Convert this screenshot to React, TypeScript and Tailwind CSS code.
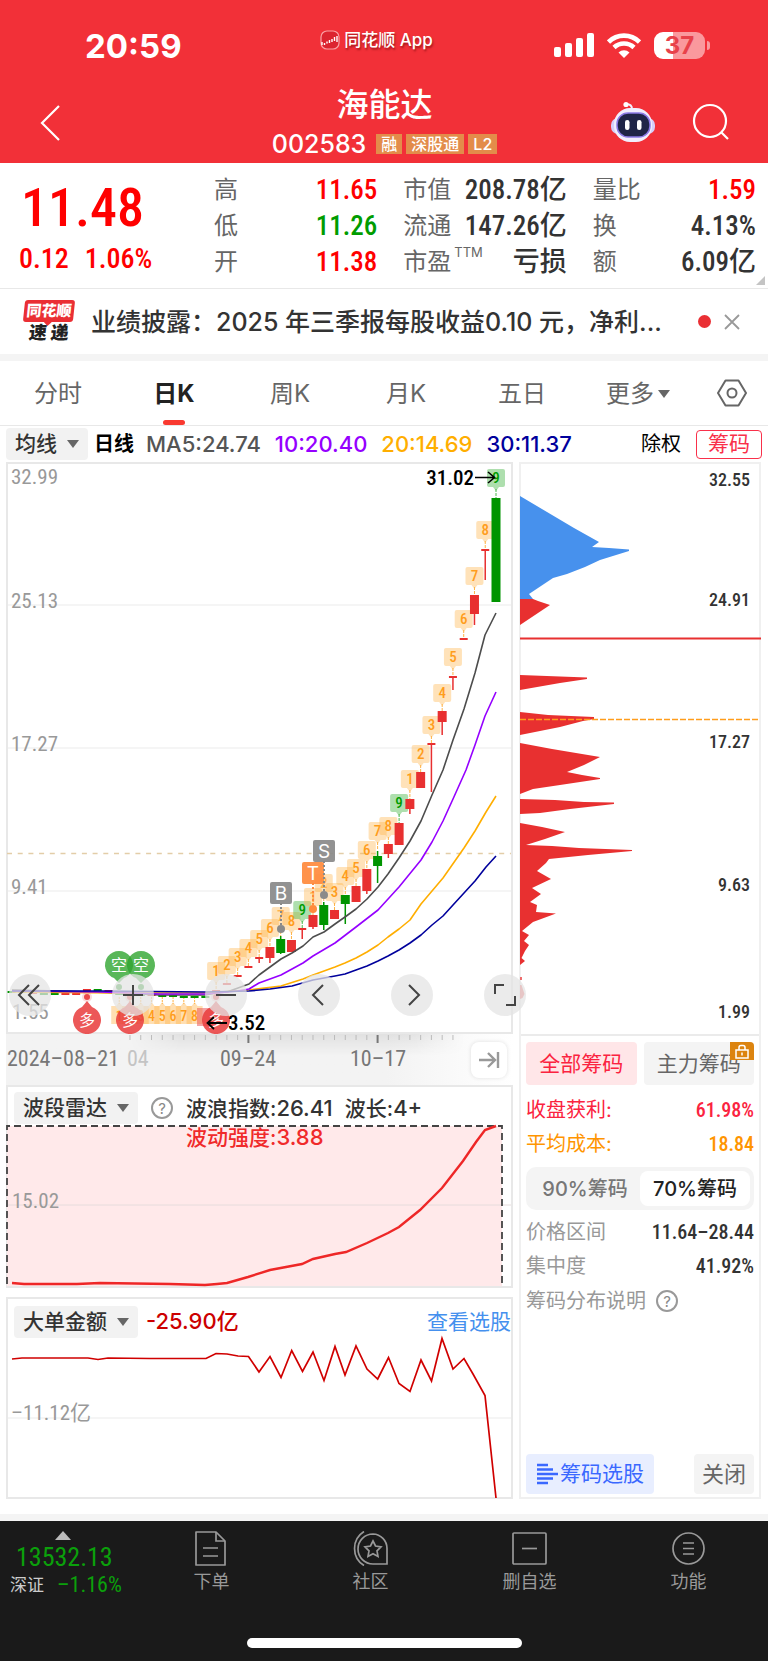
import React from 'react';

const DIN = "[font-family:'Roboto_Condensed','Roboto','Noto_Sans_CJK_SC',sans-serif]";
const UI = "[font-family:'Inter','Noto_Sans_CJK_SC',sans-serif]";

const STEP = 10.765;
const cx = (i: number) => 496 - STEP * i;

const RED = '#e83030';
const GREEN = '#009400';

type Candle = { i: number; c: 'r' | 'g'; top: number; bottom: number; hi?: number; lo?: number };

const candles: Candle[] = [
  { i: 0, c: 'g', top: 498, bottom: 602 },
  { i: 1, c: 'r', top: 549, bottom: 551, lo: 580 },
  { i: 2, c: 'r', top: 595, bottom: 614, lo: 625 },
  { i: 3, c: 'r', top: 638, bottom: 640 },
  { i: 4, c: 'r', top: 676, bottom: 678, lo: 690 },
  { i: 5, c: 'r', top: 711, bottom: 722, lo: 735 },
  { i: 6, c: 'r', top: 743, bottom: 745, lo: 792 },
  { i: 7, c: 'r', top: 772, bottom: 788 },
  { i: 8, c: 'r', top: 799, bottom: 809, lo: 814 },
  { i: 9, c: 'r', top: 823, bottom: 845 },
  { i: 10, c: 'r', top: 844, bottom: 854, lo: 858 },
  { i: 11, c: 'g', top: 856, bottom: 866, hi: 851, lo: 883 },
  { i: 12, c: 'r', top: 869, bottom: 891, lo: 894 },
  { i: 13, c: 'r', top: 886, bottom: 902 },
  { i: 14, c: 'g', top: 895, bottom: 904, lo: 924 },
  { i: 15, c: 'r', top: 910, bottom: 919 },
  { i: 16, c: 'g', top: 905, bottom: 925, hi: 902, lo: 930 },
  { i: 17, c: 'r', top: 915, bottom: 927, lo: 929 },
  { i: 18, c: 'r', top: 928, bottom: 930, lo: 939 },
  { i: 19, c: 'r', top: 940, bottom: 952 },
  { i: 20, c: 'g', top: 939, bottom: 953, hi: 936, lo: 954 },
  { i: 21, c: 'r', top: 947, bottom: 958, lo: 963 },
  { i: 22, c: 'r', top: 957, bottom: 959, lo: 963 },
  { i: 23, c: 'r', top: 966, bottom: 968 },
  { i: 24, c: 'r', top: 975, bottom: 977 },
  { i: 25, c: 'r', top: 983, bottom: 985 },
  { i: 26, c: 'r', top: 990, bottom: 992 },
  { i: 27, c: 'g', top: 996, bottom: 998 },
  { i: 28, c: 'g', top: 996, bottom: 998 },
  { i: 29, c: 'g', top: 996, bottom: 998 },
  { i: 30, c: 'g', top: 995, bottom: 997 },
  { i: 31, c: 'g', top: 995, bottom: 997 },
  { i: 32, c: 'r', top: 994, bottom: 996 },
  { i: 33, c: 'g', top: 994, bottom: 996 },
  { i: 34, c: 'g', top: 993, bottom: 995 },
  { i: 35, c: 'g', top: 993, bottom: 995 },
  { i: 36, c: 'r', top: 990, bottom: 992 },
  { i: 37, c: 'g', top: 989, bottom: 991 },
  { i: 38, c: 'r', top: 989, bottom: 991 },
  { i: 39, c: 'r', top: 993, bottom: 995 },
  { i: 40, c: 'r', top: 993, bottom: 995 },
  { i: 41, c: 'g', top: 993, bottom: 995 },
  { i: 42, c: 'g', top: 993, bottom: 995 },
  { i: 43, c: 'r', top: 992, bottom: 994 },
  { i: 44, c: 'g', top: 991, bottom: 993 },
  { i: 45, c: 'g', top: 991, bottom: 993 },
];

type Mark = [number, string, number, number];
const marks: Mark[] = [
  [26, '1', 971, 990], [25, '2', 965, 983], [24, '3', 957, 975], [23, '4', 948, 966],
  [22, '5', 939, 957], [21, '6', 928, 947], [20, '7', 916, 936], [19, '8', 921, 940],
  [18, '9', 910, 928], [17, '1', 897, 915], [16, '2', 883, 902], [15, '3', 892, 910],
  [14, '4', 876, 895], [13, '5', 868, 886], [12, '6', 850, 869], [11, '7', 831, 850],
  [10, '8', 826, 844], [9, '9', 803, 823], [8, '1', 779, 799], [7, '2', 754, 772],
  [6, '3', 725, 743], [5, '4', 693, 711], [4, '5', 657, 676], [3, '6', 619, 638],
  [2, '7', 576, 595], [1, '8', 530, 549], [0, '9', 478, 498],
];

const lowMarks: [number, string][] = [
  [35, '1'], [34, '2'], [33, '3'], [32, '4'], [31, '5'], [30, '6'], [29, '7'], [28, '8'],
];

const ma5 = '12,990 60,991 120,993 160,995 205,995 216,993 227,992 238,988 249,984 259,975 270,967 281,959 292,953 303,946 313,937 324,932 335,924 345,917 356,909 367,899 378,887 388,874 399,858 410,841 421,821 432,795 443,770 453,740 464,709 475,673 485,635 496,613';
const ma10 = '12,991 100,992 160,994 205,994 238,991 249,989 259,983 281,975 292,969 303,963 313,956 335,943 356,927 378,910 399,887 421,860 432,842 443,821 453,799 466,770 475,745 485,716 496,692';
const ma20 = '12,992 120,993 205,993 249,990 281,986 303,979 313,975 335,967 345,963 356,958 367,952 378,945 388,937 399,929 410,920 421,904 443,878 464,848 475,831 486,812 496,796';
const ma30 = '12,991 100,991 205,992 249,991 270,989 292,986 313,980 335,976 345,974 356,970 367,966 378,961 388,956 399,950 410,943 421,935 432,925 443,916 453,905 464,893 475,881 486,867 496,856';

function Grid({ y, x2 = 511 }: { y: number; x2?: number }) {
  return <line x1="8" x2={x2} y1={y} y2={y} stroke="#ebebeb" strokeWidth="1" />;
}

function NumberMark({ i, n, y, tip }: { i: number; n: string; y: number; tip: number }) {
  const x = cx(i);
  const nine = n === '9';
  const fill = nine ? '#4cb84c' : '#ffb347';
  const ink = nine ? '#009c00' : '#ff9d1c';
  const hidden = i === 16 || i === 17 || i === 20;
  return (
    <g>
      <path d={`M${x - 7} ${y - 9}h14q2 0 2 2v14q0 2 -2 2h-4l-3 4l-3 -4h-4q-2 0 -2 -2v-14q0 -2 2 -2z`} fill={fill} fillOpacity={nine ? 0.45 : 0.38} />
      <line x1={x} x2={x} y1={y + 11} y2={tip} stroke={fill} strokeDasharray="3 1" />
      <text x={x} y={y + 5} textAnchor="middle" fontSize="15" fontWeight="500" fill={ink} fillOpacity={hidden ? 0.7 : 1} className={DIN}>{n}</text>
    </g>
  );
}

function TradeMark({ x, y, dot, label, color }: { x: number; y: number; dot: number; label: string; color: string }) {
  return (
    <g>
      <line x1={x} x2={x} y1={y + 10} y2={dot} stroke={color} strokeWidth="2" strokeDasharray="2 2" />
      <circle cx={x} cy={dot} r="4" fill={color} />
      <rect x={x - 11} y={y - 11} width="22" height="22" rx="2" fill={color} fillOpacity="0.93" />
      <text x={x} y={y + 7} textAnchor="middle" fontSize="19" fill="#fff" className={UI}>{label}</text>
    </g>
  );
}

function Pin({ x, up }: { x: number; up?: boolean }) {
  return up ? (
    <g>
      <circle cx={x} cy="997" r="3" fill="#ea4a4a" />
      <circle cx={x} cy="997" r="5" fill="#ea4a4a" fillOpacity="0.2" />
      <path d={`M${x} 1001l5 6a14 14 0 1 1 -10 0z`} fill="#e93c3c" fillOpacity="0.86" />
      <text x={x} y="1026" textAnchor="middle" fontSize="16" fill="#fff" className={UI}>多</text>
    </g>
  ) : (
    <g>
      <circle cx={x} cy="987" r="3" fill="#3ba53b" />
      <path d={`M${x} 983l5 -5a14 14 0 1 0 -10 0z`} fill="#2fa52f" fillOpacity="0.8" />
      <text x={x} y="971" textAnchor="middle" fontSize="16" fill="#fff" className={UI}>空</text>
    </g>
  );
}

function AxisText({ x, y, children, size = 21, fill = '#999', end }: { x: number; y: number; children: string; size?: number; fill?: string; end?: boolean }) {
  const dark = fill === '#000' || fill === '#333';
  return (
    <text x={x} y={y} fontSize={size} fill={fill} fontWeight={dark ? 500 : 400} textAnchor={end ? 'end' : 'start'} className={DIN}>{children}</text>
  );
}

function KChart() {
  return (
    <svg viewBox="6 462 507 572" className="block w-full" role="img" aria-label="日K">
      <rect x="7" y="463" width="505" height="570" fill="#fff" stroke="#e8e8e8" strokeWidth="2" />
      <Grid y={605} />
      <Grid y={748} />
      <Grid y={891} />
      <line x1="7" x2="511" y1="853.5" y2="853.5" stroke="#e3cda8" strokeWidth="1.5" strokeDasharray="5 5.7" />
      <AxisText x={11} y={484}>32.99</AxisText>
      <AxisText x={11} y={608}>25.13</AxisText>
      <AxisText x={11} y={751}>17.27</AxisText>
      <AxisText x={11} y={894}>9.41</AxisText>
      <AxisText x={12} y={1019}>1.55</AxisText>
      {marks.map(([i, n, y, tip]) => <NumberMark key={i} i={i} n={n} y={y} tip={tip} />)}
      {lowMarks.map(([i, n]) => (
        <g key={i}>
          <path d={`M${cx(i) - 8} 1006h5l3 -4l3 4h5v18h-16z`} fill="#ffb347" fillOpacity="0.42" />
          <line x1={cx(i)} x2={cx(i)} y1="997" y2="1004" stroke="#ffb347" strokeDasharray="2 1" />
          <text x={cx(i)} y="1021" textAnchor="middle" fontSize="14" fontWeight="500" fill="#ff9d1c" className={DIN}>{n}</text>
        </g>
      ))}
      <rect x="197" y="1008" width="16" height="18" fill="#ea4a4a" fillOpacity="0.5" />
      {candles.map(({ i, c, top, bottom, hi, lo }) => {
        const color = c === 'r' ? RED : GREEN;
        const thin = bottom - top < 3;
        const w = thin ? 8 : 9;
        return (
          <g key={i} fill={color}>
            <rect x={cx(i) - w / 2} y={top} width={w} height={bottom - top} />
            {(hi || lo) && <rect x={cx(i) - 0.75} y={hi ?? top} width="1.5" height={(lo ?? bottom) - (hi ?? top)} />}
          </g>
        );
      })}
      <g fill="none" strokeWidth="1.6" strokeLinejoin="round">
        <polyline points={ma5} stroke="#4d4d4d" />
        <polyline points={ma20} stroke="#ffae00" />
        <polyline points={ma10} stroke="#9500ff" />
        <polyline points={ma30} stroke="#00009c" />
      </g>
      <TradeMark x={281} y={893} dot={929} label="B" color="#8a8a8a" />
      <TradeMark x={313} y={873} dot={909} label="T" color="#ff8b3d" />
      <TradeMark x={324} y={851} dot={895} label="S" color="#8a8a8a" />
      <Pin x={119} />
      <Pin x={141} />
      <Pin x={87} up />
      <Pin x={130} up />
      <Pin x={216} up />
      <AxisText x={474} y={485} fill="#000" end>31.02</AxisText>
      <path d="M475 477.500h19M488 472l6.500 5.500l-6.500 5.500" fill="none" stroke="#000" strokeWidth="1.6" />
      <AxisText x={228} y={1030} fill="#000">3.52</AxisText>
      <path d="M227 1023h-19M214 1017l-6.500 6l6.500 6" fill="none" stroke="#000" strokeWidth="1.8" />
    </svg>
  );
}

const round = 'flex size-[42px] shrink-0 items-center justify-center rounded-full bg-[#e4e4e4]/75 text-[#444]';

function RoundButton({ label, d, className = '' }: { label: string; d: string; className?: string }) {
  return (
    <button type="button" aria-label={label} className={`${round} ${className}`}>
      <svg viewBox="0 0 42 42" className="size-[42px]" fill="none" stroke="currentColor" strokeWidth="2"><path d={d} /></svg>
    </button>
  );
}

function TimeAxis() {
  const ticks = Array.from({ length: 31 }, (_, k) => 34 - k);
  return (
    <div className="relative flex h-[51px] items-center bg-linear-to-r from-[#f3f3f3] from-75% to-white">
      <svg viewBox="6 1034 507 51" className="absolute inset-0 h-full w-full" aria-hidden="true">
        <defs>
          <linearGradient id="shade" x1="0" x2="0" y1="0" y2="1">
            <stop offset="0" stopColor="#000" stopOpacity="0.07" />
            <stop offset="1" stopColor="#000" stopOpacity="0" />
          </linearGradient>
          <linearGradient id="sides" x1="0" x2="1" y1="0" y2="0">
            <stop offset="0" stopColor="#fff" stopOpacity="0" />
            <stop offset="0.15" stopColor="#fff" />
            <stop offset="0.85" stopColor="#fff" />
            <stop offset="1" stopColor="#fff" stopOpacity="0" />
          </linearGradient>
          <mask id="fade"><rect x="130" y="1034" width="335" height="30" fill="url(#sides)" /></mask>
        </defs>
        <rect x="130" y="1034" width="335" height="22" fill="url(#shade)" mask="url(#fade)" />
        {ticks.map((i) => {
          const major = i === 23 || i === 11;
          return <line key={i} x1={cx(i)} x2={cx(i)} y1="1035" y2={major ? 1043 : 1040} stroke={major ? '#777' : '#bbb'} strokeWidth={major ? 2 : 1} />;
        })}
        <AxisText x={7} y={1066} size={22} fill="#777">2024–08–21</AxisText>
        <AxisText x={127} y={1066} size={22} fill="#c4c4c4">04</AxisText>
        <AxisText x={220} y={1066} size={22} fill="#777">09–24</AxisText>
        <AxisText x={350} y={1066} size={22} fill="#777">10–17</AxisText>
      </svg>
      <button type="button" aria-label="最新" className="relative mr-[6px] ml-auto flex size-[36px] items-center justify-center rounded-lg bg-white shadow-[0_0_4px_rgba(0,0,0,0.12)]">
        <svg viewBox="0 0 36 36" className="size-[36px]" fill="none" stroke="#999" strokeWidth="2.4"><path d="M8 18h15M17 11l7 7l-7 7M27 10v16" /></svg>
      </button>
    </div>
  );
}

function ChipChart() {
  return (
    <svg viewBox="519 462 242 572" className="block w-full" role="img" aria-label="筹码分布">
      <path d="M520 496L574 528L599 542L592 547L609 548L629 549.500V551L600 560L585 567L567 574L553 578L529 594L533 599H520z" fill="#4791ed" />
      <path d="M520 599H533L538 601L550 605L538 613L520 625z" fill={RED} />
      <path d="M520 675L587 677.500V679L560 683L520 690zM520 712L548 715L594 717V719L583 721L560 727L540 731L520 735z" fill={RED} />
      <path d="M520 743L552 749L600 757L584 765L567 772L582 775L600 778V779L560 785L533 789L520 794zM520 799L555 800L584 802L614 802.500V804L570 809L540 813L520 814z" fill={RED} />
      <path d="M520 823L542 827L565 832L545 839L526 845L552 846L579 848L632 850V851L588 855L549 859L546 863L537 871L551 879L532 888L541 894L530 902L537 905L536 912L556 913.500L533 922L522 931L529 935L524 941L529 945L525 951L521.500 958L525 961L520 965z" fill={RED} />
      <path d="M520 977h2v3h-2zM520 985h1.500l3 9l-2 4l-2.500 1z" fill={RED} fillOpacity="0.7" />
      <rect x="520" y="637.500" width="241" height="2" fill={RED} />
      <line x1="520" x2="760" y1="719.500" y2="719.500" stroke="#ff9d1c" strokeWidth="1.6" strokeDasharray="6 2" />
      {([['32.55', 486], ['24.91', 606], ['17.27', 748], ['9.63', 891], ['1.99', 1018]] as [string, number][]).map(([t, y]) => (
        <AxisText key={t} x={750} y={y} size={18} fill="#333" end>{t}</AxisText>
      ))}
    </svg>
  );
}

function RadarChart() {
  return (
    <svg viewBox="6 1085 507 203" className="block w-full" role="img" aria-label="波段雷达">
      <rect x="7" y="1086" width="505" height="201" fill="#fff" stroke="#e8e8e8" strokeWidth="2" />
      <rect x="7" y="1126" width="495" height="160" fill="#ffe9ea" />
      <line x1="8" x2="511" y1="1205" y2="1205" stroke="#e6dcdc" />
      <AxisText x={12} y={1208}>15.02</AxisText>
      <path d="M7 1284V1126H502V1284" fill="none" stroke="#444" strokeWidth="1.8" strokeDasharray="7 4" />
      <polyline points="12,1283 24,1284 77,1284 100,1283 170,1284 205,1285 217,1284 227,1283 248,1277 270,1270 302,1264 313,1259 335,1254 346,1252 367,1243 388,1233 399,1227 420,1210 442,1188 463,1161 476,1142 485,1130 496,1126" fill="none" stroke="#ee2727" strokeWidth="2.4" />
    </svg>
  );
}

function OrderChart() {
  return (
    <svg viewBox="6 1297 507 202" className="block w-full" role="img" aria-label="大单金额">
      <rect x="7" y="1298" width="505" height="200" fill="#fff" stroke="#e8e8e8" strokeWidth="2" />
      <Grid y={1418} />
      <AxisText x={11} y={1420}>–11.12亿</AxisText>
      <polyline points="12,1359 22,1358 88,1358 98,1359.5 108,1358 150,1358.500 206,1358.500 216,1353.500 227,1354 238,1356 248.5,1356.500 259,1372 270,1356.500 281,1377.500 291.700,1350.500 302.500,1371.500 313,1352 324,1380.500 335,1346.500 345,1375 356,1346 367,1369 377.700,1379 388.500,1357.500 399,1383.500 410,1391.500 421,1360 431.500,1381 442,1338.500 453,1369 464,1358.500 473,1374 485,1395.500 496,1498" fill="none" stroke="#d00000" strokeWidth="1.7" />
    </svg>
  );
}

function Caret() {
  return <svg viewBox="0 0 12 8" className="h-2 w-3 fill-[#666]" aria-hidden="true"><path d="M0 0h12l-6 8z" /></svg>;
}

function Help() {
  return (
    <button type="button" aria-label="说明" className="flex size-[22px] items-center justify-center rounded-full border-2 border-[#999] text-[15px] leading-none text-[#888]">?</button>
  );
}

function PickButton({ children }: { children: string }) {
  return (
    <button type="button" className="flex h-8 items-center gap-[10px] rounded bg-[#f2f2f2] px-[9px] text-[21px] leading-8 font-medium text-[#333]">
      {children}
      <Caret />
    </button>
  );
}

function Header() {
  return (
    <header className="h-[163px] bg-[#f23038] text-white">
      <div className="relative flex h-[90px] items-center justify-between pr-[58px] pl-[85px]">
        <span className="pt-[2px] text-[33px] leading-10 font-bold">20:59</span>
        <div className="absolute inset-x-0 top-[28px] mr-[15px] flex items-center justify-center gap-1 text-[17px] leading-6 font-medium [text-shadow:1px_2px_2px_rgba(90,0,0,0.5)]">
          <svg viewBox="0 0 20 20" className="size-5" aria-hidden="true">
            <rect x="1" y="1" width="18" height="18" rx="6" fill="#dc2430" stroke="#f9a0a4" strokeWidth="1.2" />
            <path d="M2 12v3M4.500 13v2M7 11.500v2M9.500 10v3M12 9v3M14.500 7v4M17 6v6" stroke="#fff" strokeWidth="1.400" fill="none" />
          </svg>
          <span>同花顺 App</span>
        </div>
        <div className="flex items-center gap-[13px]">
          <svg viewBox="0 0 40 24" className="h-6 w-10 fill-white" aria-hidden="true">
            <rect x="0" y="14" width="7" height="10" rx="2" /><rect x="11" y="10" width="7" height="14" rx="2" /><rect x="22" y="5" width="7" height="19" rx="2" /><rect x="33" y="0" width="7" height="24" rx="2" />
          </svg>
          <svg viewBox="0 0 34 25" className="h-[25px] w-[34px]" fill="none" stroke="#fff" strokeWidth="4.600" aria-hidden="true">
            <path d="M1.500 9a22 22 0 0 1 31 0M7 14.500a14.500 14.500 0 0 1 20 0" />
            <path d="M11.500 19.500a8 8 0 0 1 11 0L17 25z" fill="#fff" stroke="none" />
          </svg>
          <div className="flex items-center gap-[2px]">
            <span className="flex h-[27px] w-[51px] items-center justify-center rounded-[9px] bg-linear-to-r from-white from-37% to-[#fa999d] to-37% text-[24px] leading-[27px] font-bold text-[#e8414a]">37</span>
            <span className="h-[9px] w-[3px] rounded-r-full bg-[#fa999d]" />
          </div>
        </div>
      </div>
      <div className="flex h-[73px] items-start justify-between">
        <button type="button" aria-label="返回" className="mt-[14px] ml-[39px] h-[38px] w-[206px]">
          <svg viewBox="0 0 24 38" className="h-[38px] w-6" fill="none" stroke="#fff" strokeWidth="2.2"><path d="M20 2L3 19l17 17" /></svg>
        </button>
        <div className="flex flex-col items-center">
          <h1 className="-mt-1 text-[32px] leading-[38px] font-medium">海能达</h1>
          <div className="mt-2 flex items-center gap-1">
            <span className="mr-[6px] text-[25px] leading-6 font-medium">002583</span>
            {['融', '深股通', 'L2'].map((t) => (
              <span key={t} className="h-5 bg-[#e38c4a] px-[5px] text-[16px] leading-5 font-medium">{t}</span>
            ))}
          </div>
        </div>
        <div className="mt-[11px] flex w-[244px] items-center justify-end gap-[36px] pr-[38px]">
          <button type="button" aria-label="智能助手">
            <svg viewBox="0 0 46 42" className="h-[42px] w-[46px]">
              <path d="M22 8q0-5-6-5" stroke="#f2efff" strokeWidth="2" fill="none" /><circle cx="16" cy="3.500" r="2.600" fill="#fff" />
              <rect x="1" y="17" width="44" height="16" rx="7" fill="#d6cffa" />
              <rect x="4" y="7" width="38" height="34" rx="16" fill="#f1eefd" />
              <rect x="7" y="12" width="33" height="24" rx="11" fill="#1f2547" stroke="#8b7ae6" strokeWidth="1.5" />
              <rect x="15" y="19" width="4.500" height="10" rx="2.200" fill="#fff" /><rect x="27" y="19" width="4.500" height="10" rx="2.200" fill="#fff" />
            </svg>
          </button>
          <button type="button" aria-label="搜索">
            <svg viewBox="0 0 38 38" className="size-[38px]" fill="none" stroke="#fff" strokeWidth="2.200"><circle cx="18" cy="18" r="16" /><path d="M29 29l7 7" /></svg>
          </button>
        </div>
      </div>
    </header>
  );
}

function Stat({ label, sup, value, color = 'text-[#333]' }: { label: string; sup?: string; value: string; color?: string }) {
  return (
    <div className="flex h-9 items-center justify-between">
      <dt className="flex text-[24px] leading-9 text-[#666]">{label}{sup && <sup className="top-0 ml-[3px] text-[13px] leading-4">{sup}</sup>}</dt>
      <dd className={`text-[27px] leading-9 font-medium ${DIN} ${color}`}>{value}</dd>
    </div>
  );
}

function Quote() {
  return (
    <section className="relative flex h-[126px] gap-[26px] border-b border-[#e8e8e8] pr-3">
      <div className={`w-[188px] shrink-0 text-[#ff0000] ${DIN}`}>
        <div className="pt-[18px] pl-[21px] text-[54px] leading-[54px] font-medium">11.48</div>
        <div className="flex gap-4 pt-2 pl-[19px] text-[28px] leading-8 font-medium"><span>0.12</span><span>1.06%</span></div>
      </div>
      <dl className="grid flex-1 grid-cols-3 content-start gap-x-[26px] pt-[9px]">
        <Stat label="高" value="11.65" color="text-[#ff0000]" />
        <Stat label="市值" value="208.78亿" />
        <Stat label="量比" value="1.59" color="text-[#ff0000]" />
        <Stat label="低" value="11.26" color="text-[#009c00]" />
        <Stat label="流通" value="147.26亿" />
        <Stat label="换" value="4.13%" />
        <Stat label="开" value="11.38" color="text-[#ff0000]" />
        <Stat label="市盈" sup="TTM" value="亏损" />
        <Stat label="额" value="6.09亿" />
      </dl>
      <svg viewBox="0 0 9 9" className="absolute right-[3px] bottom-[3px] size-[9px]" aria-hidden="true"><path d="M9 0v9H0z" fill="#c4c4c4" /></svg>
    </section>
  );
}

function News() {
  return (
    <section className="flex h-[72px] items-center border-b-[7px] border-[#f4f4f4] pl-[23px]">
      <div className="relative flex w-[52px] shrink-0 flex-col items-center">
        <span className="relative w-[50px] -skew-x-6 rounded-[3px] bg-[#ea2f34] text-center text-[15px] leading-[22px] font-black text-white">
          同花顺
          <svg viewBox="0 0 8 4" className="absolute top-[22px] left-[21px] h-1 w-2" aria-hidden="true"><path d="M0 0h8l-4 4z" fill="#ea2f34" /></svg>
        </span>
        <span className="-skew-x-6 text-[18px] leading-[22px] font-black text-[#222]">速 递</span>
      </div>
      <p className="ml-4 flex-auto text-[25px] leading-9 font-medium whitespace-pre text-[#333]">业绩披露：2025 年三季报每股收益0.10 元，净利...</p>
      <span className="size-[13px] shrink-0 rounded-full bg-[#ea2f34]" />
      <button type="button" aria-label="关闭" className="mr-[28px] ml-[13px] shrink-0">
        <svg viewBox="0 0 16 16" className="size-4" stroke="#999" strokeWidth="1.800"><path d="M1 1l14 14M15 1L1 15" /></svg>
      </button>
    </section>
  );
}

function Tabs() {
  return (
    <nav className="flex h-[65px] items-stretch border-b border-[#e8e8e8] text-[24px] text-[#666]">
      {['分时', '日K', '周K', '月K', '五日', '更多'].map((t) => {
        const on = t === '日K';
        return (
          <button key={t} type="button" className={`relative flex flex-1 items-center justify-center gap-1 pt-[2px] ${on ? 'font-bold text-[#222]' : ''}`}>
            {t}
            {t === '更多' && <Caret />}
            {on && <span className="absolute bottom-0 h-[5px] w-[22px] rounded-full bg-[#f93930]" />}
          </button>
        );
      })}
      <button type="button" aria-label="设置" className="flex w-[72px] items-center justify-center">
        <svg viewBox="0 0 30 28" className="h-7 w-[30px]" fill="none" stroke="#666" strokeWidth="2"><path d="M8.500 1.500h13L29 14l-7.500 12.500h-13L1 14z" strokeLinejoin="round" /><circle cx="15" cy="14" r="4.500" /></svg>
      </button>
    </nav>
  );
}

function Averages() {
  return (
    <div className="flex h-9 items-center px-[6px] text-[20px] leading-8 font-medium">
      <PickButton>均线</PickButton>
      <b className="ml-[6px] font-bold text-black">日线</b>
      <div className="ml-3 flex gap-[14px] text-[22px]">
        <span className="text-[#555]">MA5:24.74</span>
        <span className="text-[#9500ff]">10:20.40</span>
        <span className="text-[#ffae00]">20:14.69</span>
        <span className="text-[#00009c]">30:11.37</span>
      </div>
      <button type="button" className="ml-auto font-normal text-black">除权</button>
      <button type="button" className="ml-[15px] flex h-[29px] items-center rounded border border-[#f9304a] px-[11px] text-[21px] font-normal text-[#f9304a]">筹码</button>
    </div>
  );
}

function Row({ label, value, color, vcolor }: { label: string; value: string; color: string; vcolor?: string }) {
  return (
    <div className={`flex h-[34px] items-center justify-between text-[20px] leading-[34px] ${color}`}>
      <dt>{label}</dt>
      <dd className={`font-medium ${DIN} ${vcolor ?? ''}`}>{value}</dd>
    </div>
  );
}

function ChipPanel() {
  return (
    <aside className="flex w-[242px] shrink-0 flex-col border-2 border-[#f0f0f0] bg-white">
      <div className="-m-[2px] mb-0"><ChipChart /></div>
      <div className="flex flex-1 flex-col border-t-2 border-[#ebebeb] px-[5px] pt-[6px]">
        <div className="flex gap-[7px] text-[21px]">
          <button type="button" className="h-[43px] flex-1 rounded bg-[#ffe6e8] text-[#fb2340]">全部筹码</button>
          <button type="button" className="relative h-[43px] flex-1 rounded bg-[#f4f4f4] text-[#666]">
            主力筹码
            <span className="absolute top-0 right-0 flex h-[18px] w-6 items-center justify-center rounded-tr bg-[#dc8410]">
              <svg viewBox="0 0 14 15" className="h-[15px] w-[14px]" fill="none" stroke="#fff" strokeWidth="1.500" aria-hidden="true"><rect x="1" y="6" width="12" height="8" /><path d="M4 6V3.500Q4 1.500 6 1.500h2q2 0 2 2V6M7 8.500v3" /></svg>
            </span>
          </button>
        </div>
        <dl className="mt-[8px]">
          <Row label="收盘获利:" value="61.98%" color="text-[#fb2340]" />
          <Row label="平均成本:" value="18.84" color="text-[#ff9500]" />
        </dl>
        <div className="mt-[6px] flex h-[43px] items-center rounded-[10px] bg-[#f4f4f4] p-1 text-[20px]">
          <button type="button" className="h-full flex-1 font-medium text-[#777]">90%筹码</button>
          <button type="button" className="h-full flex-1 rounded-lg bg-white font-medium text-[#222]">70%筹码</button>
        </div>
        <dl className="mt-[5px]">
          <Row label="价格区间" value="11.64–28.44" color="text-[#999]" vcolor="text-[#333]" />
          <Row label="集中度" value="41.92%" color="text-[#999]" vcolor="text-[#333]" />
        </dl>
        <div className="flex h-9 items-center gap-[10px] text-[20px] text-[#999]">筹码分布说明<Help /></div>
        <div className="mt-auto mb-[3px] flex h-10 justify-between">
          <button type="button" className="flex items-center gap-[2px] rounded bg-[#e8eeff] px-[10px] text-[21px] text-[#3a68ff]">
            <svg viewBox="0 0 22 22" className="size-[22px]" stroke="#3a68ff" strokeWidth="2.400" aria-hidden="true"><path d="M1 2h11M1 6.500h16M1 11h21M1 15.500h16M1 20h11" /></svg>
            筹码选股
          </button>
          <button type="button" className="rounded bg-[#f4f4f4] px-2 text-[22px] text-[#666]">关闭</button>
        </div>
      </div>
    </aside>
  );
}

const navItems: [string, React.ReactNode][] = [
  ['下单', <><path d="M2 1h20l9 9v24H2z" strokeLinejoin="round" /><path d="M22 1v9h9M9 17h15M9 25h15" /></>],
  ['社区', <><path d="M11 0.500A20 20 0 0 0 11 34.500" /><path d="M20 3a14.500 14.500 0 0 0 0 30h14V17.500A14.500 14.500 0 0 0 20 3z" /><path d="M20 10l2.500 5l5.500 0.800l-4 4l1 5.600l-5-2.700l-5 2.700l1-5.600l-4-4l5.500-0.800z" /></>],
  ['删自选', <><rect x="1" y="2" width="33" height="31" rx="1" /><path d="M10 17.500h15" /></>],
  ['功能', <><circle cx="17.500" cy="17.500" r="15.500" /><path d="M12 12h11M12 17.500h11M12 23h11" /></>],
];

function Footer() {
  return (
    <footer className="bg-[#1a1a1a] pt-[10px] pb-[13px]">
      <div className="flex">
        <a href="#index" className="flex w-[132px] shrink-0 flex-col">
          <svg viewBox="0 0 16 9" className="ml-[55px] h-[9px] w-4" aria-hidden="true"><path d="M0 9L8 0l8 9z" fill="#bbb" /></svg>
          <span className={`mt-[3px] pl-4 text-[26px] leading-7 text-[#0ba00b] ${DIN}`}>13532.13</span>
          <span className="flex items-center gap-[13px] pl-[10px] leading-7"><span className="text-[17px] text-[#ccc]">深证</span><span className={`text-[22px] text-[#0ba00b] ${DIN}`}>–1.16%</span></span>
        </a>
        {navItems.map(([t, icon]) => (
          <a key={t} href="#nav" className="flex flex-1 flex-col items-center gap-1 text-[18px] leading-6 text-[#999]">
            <svg viewBox="0 0 35 35" className="size-[35px]" fill="none" stroke="#999" strokeWidth="1.700" aria-hidden="true">{icon}</svg>
            {t}
          </a>
        ))}
      </div>
      <div className="mx-auto mt-[39px] h-[10px] w-[275px] rounded-full bg-white" />
    </footer>
  );
}

export default function App() {
  return (
    <div className={`w-full bg-white ${UI}`}>
      <Header />
      <Quote />
      <News />
      <Tabs />
      <Averages />
      <main className="flex items-stretch gap-[6px] pr-[7px] pl-[6px]">
        <div className="flex min-w-0 flex-1 flex-col">
          <div className="relative z-10">
            <KChart />
            <div className="absolute bottom-[18px] left-[3px] flex gap-[51px]">
              <RoundButton label="最早" d="M20 11L10 21l10 10M30 11L20 21l10 10" className="mr-[10px]" />
              <RoundButton label="放大" d="M11 21h20M21 11v20" />
              <RoundButton label="缩小" d="M11 21h20" />
              <RoundButton label="向左" d="M25 11L15 21l10 10" />
              <RoundButton label="向右" d="M18 11l10 10l-10 10" />
              <RoundButton label="全屏" d="M11 20V11h9M31 22v9h-9" />
            </div>
          </div>
          <TimeAxis />
          <div className="relative">
            <RadarChart />
            <div className="absolute top-[7px] left-2 flex items-start gap-[13px]">
              <PickButton>波段雷达</PickButton>
              <div className="pt-[5px]"><Help /></div>
              <div className="pt-[2px] text-[21px] leading-[29px] font-medium text-[#333]">
                <p className="flex gap-3"><span>波浪指数:<span className="text-[22px]">26.41</span></span><span>波长:<span className="text-[22px]">4+</span></span></p>
                <p className="text-[#f02a2a]">波动强度:<span className="text-[22px]">3.88</span></p>
              </div>
            </div>
          </div>
          <div className="relative mt-[9px]">
            <OrderChart />
            <div className="absolute inset-x-2 top-2 mr-[-6px] flex items-center gap-2 text-[21px] font-medium">
              <PickButton>大单金额</PickButton>
              <span className="text-[22px] text-[#cc0000]">-25.90亿</span>
              <a href="#picks" className="ml-auto font-normal text-[#4590ee]">查看选股</a>
            </div>
          </div>
        </div>
        <ChipPanel />
      </main>
      <div className="mt-[15px] h-[7px] bg-[#f4f4f4]" />
      <Footer />
    </div>
  );
}
